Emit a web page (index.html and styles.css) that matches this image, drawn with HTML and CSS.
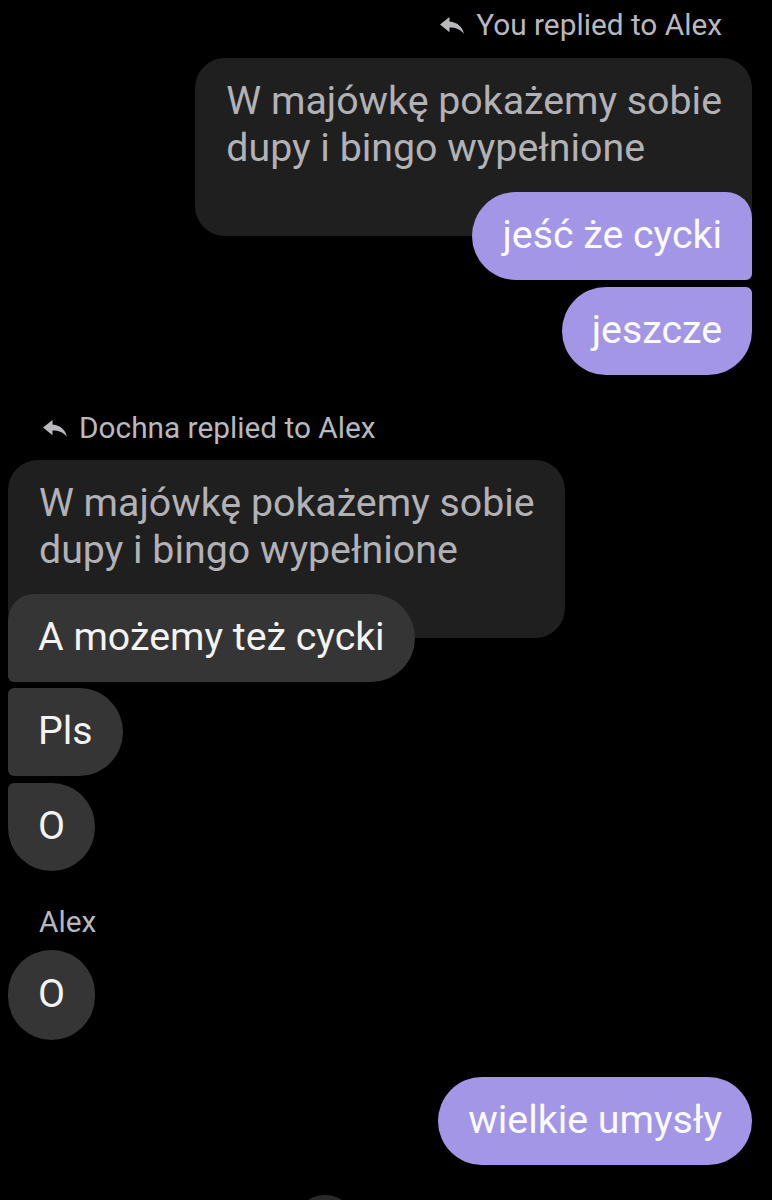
FILE: index.html
```html
<!DOCTYPE html>
<html lang="pl">
<head>
<meta charset="utf-8">
<title>Chat</title>
<link rel="stylesheet" href="styles.css">
</head>
<body>
<main class="chat">
  <section class="group out">
    <div class="label reply-label out-label">
      <svg class="reply-icon" viewBox="0 0 24 17" aria-hidden="true"><path d="M9.5 0 L0 7.6 L9.5 15.2 V10.6 C15.5 10.6 20.5 12.4 24 17 C22.8 10.4 18.2 5.2 9.5 4.4 Z"/></svg>
      <span>You replied to Alex</span>
    </div>
    <div class="quote">W majówkę pokażemy sobie<br>dupy i bingo wypełnione</div>
    <div class="bubble sent first">jeść że cycki</div>
    <div class="bubble sent last">jeszcze</div>
  </section>

  <section class="group in">
    <div class="label reply-label in-label">
      <svg class="reply-icon" viewBox="0 0 24 17" aria-hidden="true"><path d="M9.5 0 L0 7.6 L9.5 15.2 V10.6 C15.5 10.6 20.5 12.4 24 17 C22.8 10.4 18.2 5.2 9.5 4.4 Z"/></svg>
      <span>Dochna replied to Alex</span>
    </div>
    <div class="quote">W majówkę pokażemy sobie<br>dupy i bingo wypełnione</div>
    <div class="bubble recv first">A możemy też cycki</div>
    <div class="bubble recv middle">Pls</div>
    <div class="bubble recv last">O</div>
  </section>

  <section class="group in single">
    <div class="label name-label">Alex</div>
    <div class="bubble recv solo">O</div>
  </section>

  <section class="group out single-out">
    <div class="bubble sent solo">wielkie umysły</div>
  </section>

  <div class="fab"></div>
</main>
</body>
</html>
```

FILE: styles.css
```css
html, body {
  margin: 0;
  padding: 0;
  background: #000;
}

body {
  font-family: Roboto, "Noto Sans", "Liberation Sans", sans-serif;
  overflow: hidden;
}

.chat {
  display: flex;
  flex-direction: column;
  padding: 8px 20px 0 8px;
}

.group {
  display: flex;
  flex-direction: column;
}

.group.out {
  align-items: flex-end;
}

.group.in {
  align-items: flex-start;
  margin-top: 36px;
}

.group.single {
  margin-top: 34px;
}

.group.single-out {
  margin-top: 37px;
}

.label {
  font-size: 29.8px;
  line-height: 34px;
  height: 34px;
  color: #b9b9bd;
  display: flex;
  align-items: center;
  white-space: nowrap;
}

.reply-label {
  gap: 12px;
  margin-bottom: 15px;
}

.out-label {
  margin-right: 30px;
  margin-bottom: 16px;
}

.in-label {
  margin-left: 35px;
}

.name-label {
  margin-left: 31px;
  margin-bottom: 11px;
}

.reply-icon {
  width: 24px;
  height: 17px;
  fill: #b9b9bd;
  flex: none;
}

.quote {
  background: #1f1f1f;
  color: #b2b2b6;
  font-size: 39.3px;
  line-height: 47px;
  padding: 20px 30px 64px 31px;
  border-radius: 30px;
  white-space: nowrap;
}

.bubble {
  font-size: 39.3px;
  line-height: 47px;
  padding: 20px 30px 21px;
  border-radius: 44px;
  white-space: nowrap;
  position: relative;
}

.bubble.sent {
  background: #a396e7;
  color: #fbfaff;
}

.bubble.recv {
  background: #353535;
  color: #f3f3f3;
}

.bubble.first {
  margin-top: -44px;
}

.bubble.sent.first {
  border-top-right-radius: 26px;
  border-bottom-right-radius: 6px;
}

.bubble.sent.last {
  margin-top: 7px;
  border-top-right-radius: 6px;
}

.bubble.recv.first {
  border-top-left-radius: 26px;
  border-bottom-left-radius: 6px;
}

.bubble.recv.middle {
  margin-top: 6px;
  border-top-left-radius: 6px;
  border-bottom-left-radius: 6px;
}

.bubble.recv.last {
  margin-top: 7px;
  border-top-left-radius: 6px;
}

.bubble.solo {
  border-radius: 44px;
}

.bubble.recv.solo {
  padding-top: 21px;
  padding-bottom: 22px;
}

.fab {
  align-self: flex-start;
  margin-left: 285px;
  margin-top: 30px;
  width: 64px;
  height: 64px;
  border-radius: 50%;
  background: #2a2a2a;
}
```
